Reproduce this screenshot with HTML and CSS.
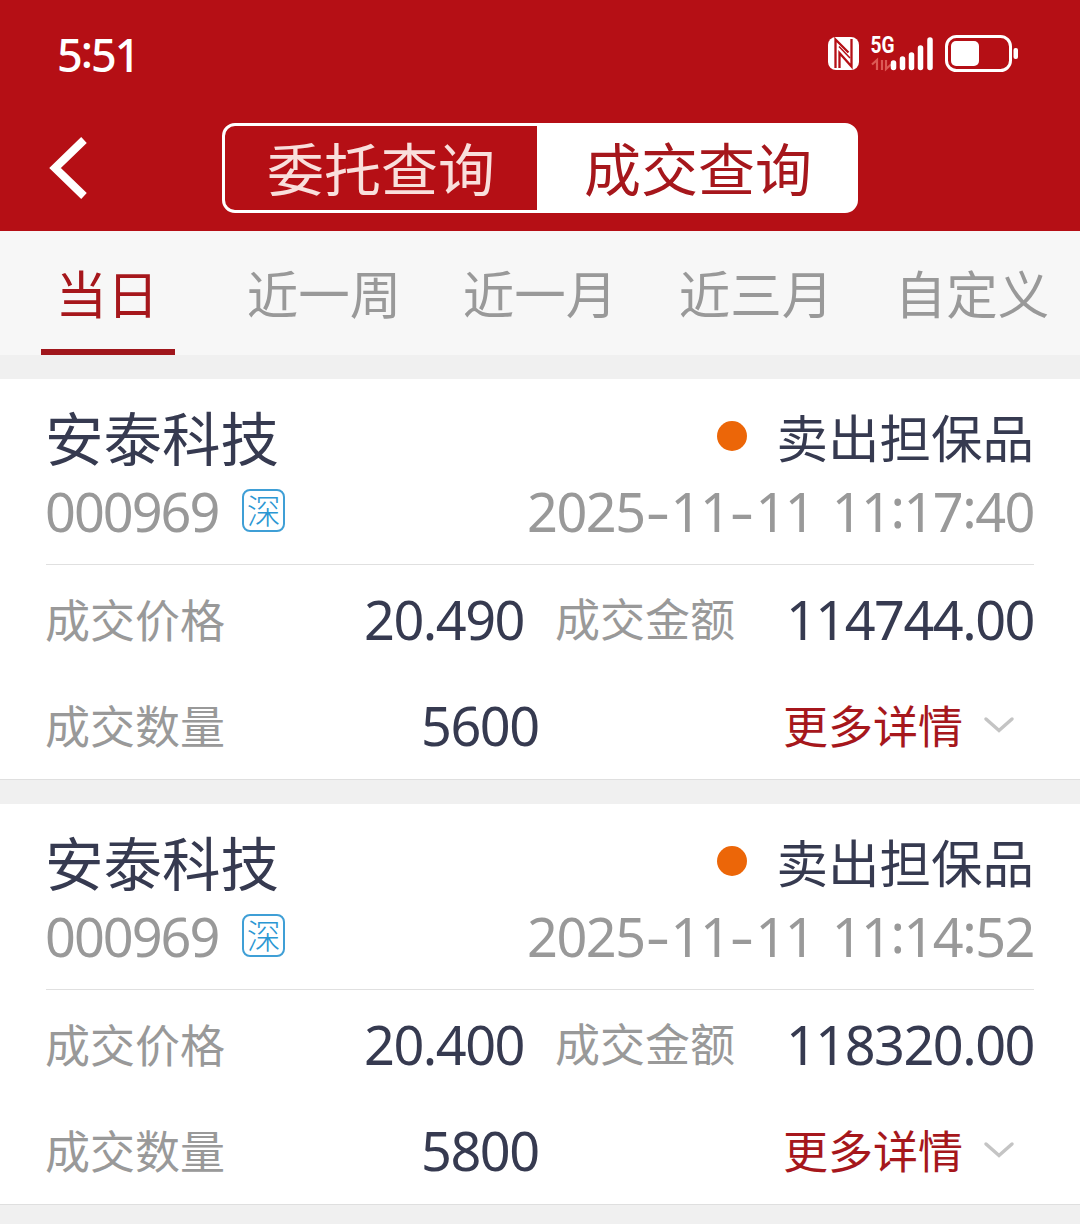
FILE: index.html
```html
<!DOCTYPE html>
<html lang="zh-CN">
<head>
    <meta charset="UTF-8">
    <meta name="viewport" content="width=device-width, initial-scale=1.0">
    <title>成交查询</title>
    <link rel="stylesheet" href="styles.css">
</head>
<body>
    <header class="header">
        <!-- 状态栏 -->
        <div class="status-bar">
            <span class="clock">5<i>:</i>51</span>
            <svg class="status-icons" width="194" height="42" viewBox="0 0 194 42">
                <rect x="2" y="5" width="31" height="33" rx="8" fill="#fff"/>
                <path d="M9.500 36V7.500L22.500 20.500M25.500 7v27.500L13.500 21v15" fill="none" stroke="#b50f15" stroke-width="2.300"/>
                <path d="M13 14.500L24 26" fill="none" stroke="#b50f15" stroke-width="1.500"/>
                <text class="network" x="44.500" y="21" textLength="24" lengthAdjust="spacingAndGlyphs">5G</text>
                <path d="M46 32.500l5-4.500v10M56 38V28M60 28v9l5-4.500" fill="none" stroke="#dc5a55" stroke-width="2.200"/>
                <path d="M67.500 31v4.500M76.500 27v8.500M85.500 23v12.500M94.500 16v19.500M104 8v27.500" fill="none" stroke="#fff" stroke-width="5.500" stroke-linecap="round"/>
                <rect x="120.500" y="4.500" width="64" height="34" rx="10" fill="none" stroke="#fff" stroke-width="3"/>
                <rect x="125" y="9" width="28" height="25" rx="5" fill="#fff"/>
                <rect x="187.500" y="16" width="4.500" height="11" rx="2" fill="#fff"/>
            </svg>
        </div>

        <!-- 导航栏 -->
        <div class="nav-bar">
            <svg class="back" width="42" height="64" viewBox="0 0 42 64">
                <path d="M38 4L9 32l29 28" fill="none" stroke="#fff" stroke-width="8"/>
            </svg>
            <div class="segment">
                <div class="segment-item">委托查询</div>
                <div class="segment-item active">成交查询</div>
            </div>
        </div>
    </header>

    <nav class="tabs">
        <div class="tab active"><span>当日</span></div>
        <div class="tab"><span>近一周</span></div>
        <div class="tab"><span>近一月</span></div>
        <div class="tab"><span>近三月</span></div>
        <div class="tab"><span>自定义</span></div>
    </nav>

    <main class="list">
        <section class="card">
            <div class="row row-name">
                <span class="name">安泰科技</span>
                <span class="type"><i class="dot"></i>卖出担保品</span>
            </div>
            <div class="row row-code">
                <span class="code">000969</span>
                <span class="market">深</span>
                <span class="time">2025<b>-</b>11<b>-</b>11 11<i>:</i>17<i>:</i>40</span>
            </div>
            <div class="row row-price">
                <span class="label">成交价格</span>
                <span class="value price">20.490</span>
                <span class="label amount-label">成交金额</span>
                <span class="value amount">114744.00</span>
            </div>
            <div class="row row-count">
                <span class="label">成交数量</span>
                <span class="value count">5600</span>
                <span class="more">更多详情
                    <svg width="32" height="18" viewBox="0 0 32 18">
                        <path d="M3 3l13 11.500L29 3" fill="none" stroke="#c4c4c4" stroke-width="3.500" stroke-linecap="round"/>
                    </svg>
                </span>
            </div>
        </section>

        <section class="card">
            <div class="row row-name">
                <span class="name">安泰科技</span>
                <span class="type"><i class="dot"></i>卖出担保品</span>
            </div>
            <div class="row row-code">
                <span class="code">000969</span>
                <span class="market">深</span>
                <span class="time">2025<b>-</b>11<b>-</b>11 11<i>:</i>14<i>:</i>52</span>
            </div>
            <div class="row row-price">
                <span class="label">成交价格</span>
                <span class="value price">20.400</span>
                <span class="label amount-label">成交金额</span>
                <span class="value amount">118320.00</span>
            </div>
            <div class="row row-count">
                <span class="label">成交数量</span>
                <span class="value count">5800</span>
                <span class="more">更多详情
                    <svg width="32" height="18" viewBox="0 0 32 18">
                        <path d="M3 3l13 11.500L29 3" fill="none" stroke="#c4c4c4" stroke-width="3.500" stroke-linecap="round"/>
                    </svg>
                </span>
            </div>
        </section>
    </main>
</body>
</html>
```
FILE: styles.css
```css
* {
    box-sizing: border-box;
}

body {
    margin: 0;
    width: 1080px;
    height: 1224px;
    overflow: hidden;
    background: #f0f0f0;
    font-family: "Noto Sans CJK SC", sans-serif;
    color: #363a50;
}

.header {
    height: 231px;
    background: #b50f15;
    color: #fff;
}

.status-bar {
    display: flex;
    justify-content: space-between;
    height: 123px;
    padding: 32px 60px 0 57px;
}

.clock {
    font-family: "Noto Sans", sans-serif;
    font-size: 45px;
    font-weight: 500;
    line-height: 46px;
    letter-spacing: -2px;
}

/* 冒号上移，与数字居中 */
.clock i,
.time i {
    display: inline-block;
    font-style: normal;
    transform: translateY(-4px);
}

.network {
    font-family: Roboto, sans-serif;
    font-size: 23px;
    font-weight: 700;
    fill: #fff;
}

.nav-bar {
    display: flex;
    align-items: center;
    height: 90px;
    padding-left: 46px;
}

.segment {
    display: flex;
    width: 636px;
    height: 90px;
    margin-left: 134px;
    border: 3px solid #fff;
    border-radius: 13px;
    background: linear-gradient(to right, #b50f15 312px, #fff 312px);
}

.segment-item {
    width: 312px;
    font-size: 57px;
    line-height: 80px;
    text-align: center;
    color: #f9dfdc;
}

.segment-item.active {
    flex: 1;
    padding-left: 4px;
    color: #a6171c;
}

.tabs {
    display: flex;
    height: 124px;
    background: #f7f7f7;
}

.tab {
    display: flex;
    flex: 1;
    justify-content: center;
    font-size: 51.500px;
    line-height: 122px;
    color: #999;
}

.tab.active {
    color: #a6171c;
}

.tab.active span {
    width: 134px;
    height: 124px;
    padding-right: 2px;
    border-bottom: 6px solid #a0161c;
    text-align: center;
}

.list {
    padding-top: 24px;
}

.card {
    height: 401px;
    margin-bottom: 24px;
    padding: 20px 46px 0;
    background: #fff;
    border-bottom: 1px solid #dfdfdf;
}

.row {
    display: flex;
    align-items: center;
    white-space: nowrap;
}

.row-name {
    height: 74px;
}

.name {
    margin-left: -1px;
    font-size: 58.500px;
    line-height: 74px;
}

.type {
    display: flex;
    align-items: center;
    margin-left: auto;
    font-size: 51.500px;
    line-height: 74px;
}

.dot {
    width: 30px;
    height: 30px;
    margin-right: 29px;
    border-radius: 50%;
    background: #ec6608;
}

.row-code {
    height: 92px;
    padding-bottom: 15px;
    border-bottom: 1px solid #e0e0e0;
}

.code,
.time,
.value {
    font-family: "Noto Sans", sans-serif;
    font-size: 54px;
    line-height: 74px;
    letter-spacing: -1.500px;
}

.code {
    margin-left: -1px;
    letter-spacing: -2px;
    color: #999;
}

.market {
    width: 43px;
    height: 43px;
    margin: -1px 0 0 24px;
    border: 2px solid #3f9fd6;
    border-radius: 8px;
    font-size: 34px;
    font-weight: 300;
    line-height: 37px;
    text-align: center;
    color: #2b97d3;
}

.time {
    margin-left: auto;
    word-spacing: 5px;
    color: #999;
}

.time b {
    display: inline-block;
    width: 26px;
    font-weight: 400;
    text-align: center;
    transform: translateX(-1px) scaleX(1.4);
}

.row-price {
    height: 108px;
}

.label {
    width: 180px;
    margin-left: -1px;
    font-size: 45px;
    line-height: 66px;
    color: #999;
}

.price {
    width: 299px;
    text-align: right;
}

.amount-label {
    margin-left: 31px;
    padding-bottom: 3px;
}

.amount {
    margin-left: auto;
}

.row-count {
    height: 104px;
}

.count {
    margin-left: 196px;
}

.more {
    display: flex;
    align-items: center;
    margin-left: auto;
    padding-right: 19px;
    gap: 20px;
    font-size: 45px;
    line-height: 66px;
    color: #a6171c;
}
```
